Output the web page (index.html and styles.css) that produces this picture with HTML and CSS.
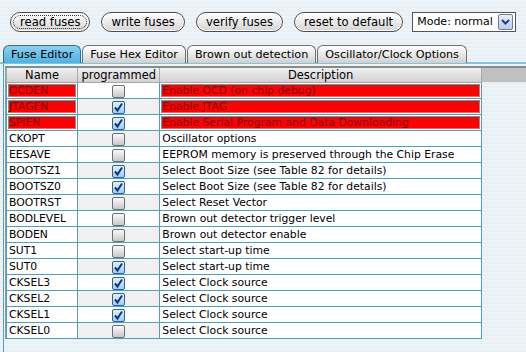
FILE: index.html
```html
<!DOCTYPE html>
<html lang="en">
<head>
  <meta charset="UTF-8">
  <title>fuse editor</title>
  <link rel="stylesheet" href="styles.css">
</head>
<body>

  <!-- Toolbar -->
  <div class="toolbar">
    <button class="btn focused">read fuses</button>
    <button class="btn">write fuses</button>
    <button class="btn">verify fuses</button>
    <button class="btn">reset to default</button>
    <div class="select">
      <span>Mode: normal</span>
      <span class="select-arrow">
        <svg width="9" height="6" viewBox="0 0 9 6"><path d="M1 1 L4.5 4.5 L8 1" fill="none" stroke="#1c3f8c" stroke-width="2"/></svg>
      </span>
    </div>
  </div>

  <!-- Tabs -->
  <div class="tabs">
    <div class="tab active">Fuse Editor</div>
    <div class="tab">Fuse Hex Editor</div>
    <div class="tab">Brown out detection</div>
    <div class="tab">Oscillator/Clock Options</div>
  </div>

  <!-- Fuse table -->
  <div class="panel">
    <div class="grid-wrap">
      <table>
        <thead>
          <tr>
            <th class="col-name">Name</th>
            <th class="col-prog">programmed</th>
            <th class="col-desc">Description</th>
          </tr>
        </thead>
        <tbody id="fuseTable"></tbody>
      </table>
      <div class="header-fill"></div>
    </div>
  </div>

  <script>
    const fuses = [
      ["OCDEN", false, "Enable OCD (on chip debug)", true],
      ["JTAGEN", true, "Enable JTAG", true],
      ["SPIEN", true, "Enable Serial Program and Data Downloading", true],
      ["CKOPT", false, "Oscillator options"],
      ["EESAVE", false, "EEPROM memory is preserved through the Chip Erase"],
      ["BOOTSZ1", true, "Select Boot Size (see Table 82 for details)"],
      ["BOOTSZ0", true, "Select Boot Size (see Table 82 for details)"],
      ["BOOTRST", false, "Select Reset Vector"],
      ["BODLEVEL", false, "Brown out detector trigger level"],
      ["BODEN", false, "Brown out detector enable"],
      ["SUT1", false, "Select start-up time"],
      ["SUT0", true, "Select start-up time"],
      ["CKSEL3", true, "Select Clock source"],
      ["CKSEL2", true, "Select Clock source"],
      ["CKSEL1", true, "Select Clock source"],
      ["CKSEL0", false, "Select Clock source"]
    ];

    const checkSvg = '<svg width="11" height="11" viewBox="0 0 11 11"><path d="M2 5.5 L4.5 8.5 L9 1.5" fill="none" stroke="#103a7a" stroke-width="2"/></svg>';

    let tableBody = document.getElementById("fuseTable");
    fuses.forEach(function(f, i) {
      let row = document.createElement("tr");
      let warn = f[3] ? " warn" : "";

      let nameCell = document.createElement("td");
      nameCell.className = "col-name" + warn;
      nameCell.textContent = f[0];
      row.appendChild(nameCell);

      let progCell = document.createElement("td");
      progCell.className = "col-prog" + (i % 2 ? " alt" : "");
      let box = document.createElement("span");
      box.className = "check" + (f[1] ? " on" : "");
      if (f[1]) box.innerHTML = checkSvg;
      progCell.appendChild(box);
      row.appendChild(progCell);

      let descCell = document.createElement("td");
      descCell.className = "col-desc" + warn;
      descCell.textContent = f[2];
      row.appendChild(descCell);

      tableBody.appendChild(row);
    });
  </script>

</body>
</html>
```

FILE: styles.css
```css
body {
  margin: 0;
  font-family: "DejaVu Sans", sans-serif;
  font-size: 10.8px;
  color: #000;
  background: repeating-linear-gradient(#eef3f7 0, #eef3f7 2px, #e9f0f5 2px, #e9f0f5 4px);
  height: 352px;
  overflow: hidden;
}

/* Toolbar */
.toolbar {
  display: flex;
  align-items: center;
  padding: 11px 0 0 10px;
  height: 21px;
}

.btn {
  font-family: inherit;
  font-size: 11.6px;
  height: 20px;
  padding: 0 9px;
  margin-right: 11px;
  border: 1px solid #4d4d4d;
  border-radius: 10px;
  background: linear-gradient(#ffffff, #e6e6e6 60%, #d4d4d4);
  color: #000;
  box-shadow: inset 0 0 0 1px #fff;
}

.btn.focused {
  outline: 1px dotted #333;
  outline-offset: -4px;
}

.select {
  display: flex;
  align-items: center;
  justify-content: space-between;
  box-sizing: border-box;
  width: 104px;
  height: 20px;
  margin-left: -2px;
  padding: 0 2px 0 4px;
  font-size: 11px;
  white-space: nowrap;
  background: #fff;
  border: 1px solid #555;
}

.select-arrow {
  display: flex;
  align-items: center;
  justify-content: center;
  width: 13px;
  height: 14px;
  border: 1px solid #6e7f9a;
  border-radius: 2px;
  background: linear-gradient(#e6eefb, #b9cdf0);
}

/* Tabs */
.tabs {
  display: flex;
  padding: 13px 0 0 3px;
  height: 17px;
  border-bottom: 2px solid #7ec6dc;
}

.tab {
  height: 17px;
  padding: 0 7px;
  line-height: 17px;
  font-size: 11.2px;
  border: 1px solid #707070;
  border-bottom: none;
  border-radius: 6px 6px 0 0;
  background: linear-gradient(#ffffff, #e4e4e4 60%, #cfcfcf);
  margin-right: 1px;
}

.tab.active {
  background: linear-gradient(#8bd0f0, #4fb2e2);
  border-color: #2c6f94;
  padding: 0 7px;
}

/* Panel */
.panel {
  margin-left: 3px;
  border-left: 1px solid #4aa3c2;
  padding: 2px 0 0 0;
  height: 290px;
}

.grid-wrap {
  display: flex;
  border-top: 2px solid #8a8a8a;
  border-left: 1px solid #9a9a9a;
  margin-left: 1px;
}

table {
  border-collapse: collapse;
  width: 476px;
  background: #fff;
}

th {
  height: 14px;
  padding: 0;
  font-weight: normal;
  font-size: 11.5px;
  text-align: center;
  background: linear-gradient(#f0f0f0, #d2d2d2);
  border: 1px solid #a8a8a8;
  border-top: none;
}

td {
  height: 15px;
  padding: 0 0 0 2px;
  border: 1px solid #4aa3b8;
  white-space: nowrap;
  line-height: 15px;
}

.col-name { width: 68px; }
.col-prog { width: 81px; text-align: center; padding: 0; }
.col-desc { width: 318px; }

td.alt { background: #f0f0f0; }

td.warn {
  background: #ff0000;
  color: #800000;
  box-shadow: inset 0 0 0 1px #fff, inset 0 0 0 2px #8c8c8c;
}

.header-fill {
  flex: 1;
  height: 14px;
  background: #c0c0c0;
}

/* Checkbox */
.check {
  display: inline-flex;
  align-items: center;
  justify-content: center;
  width: 11px;
  height: 11px;
  vertical-align: middle;
  border: 1px solid #707070;
  border-radius: 2px;
  background: linear-gradient(#fafafa, #c8c8c8);
}

.check.on {
  border-color: #34628f;
  background: linear-gradient(#e4f2fd, #9ccdf2);
}
```
